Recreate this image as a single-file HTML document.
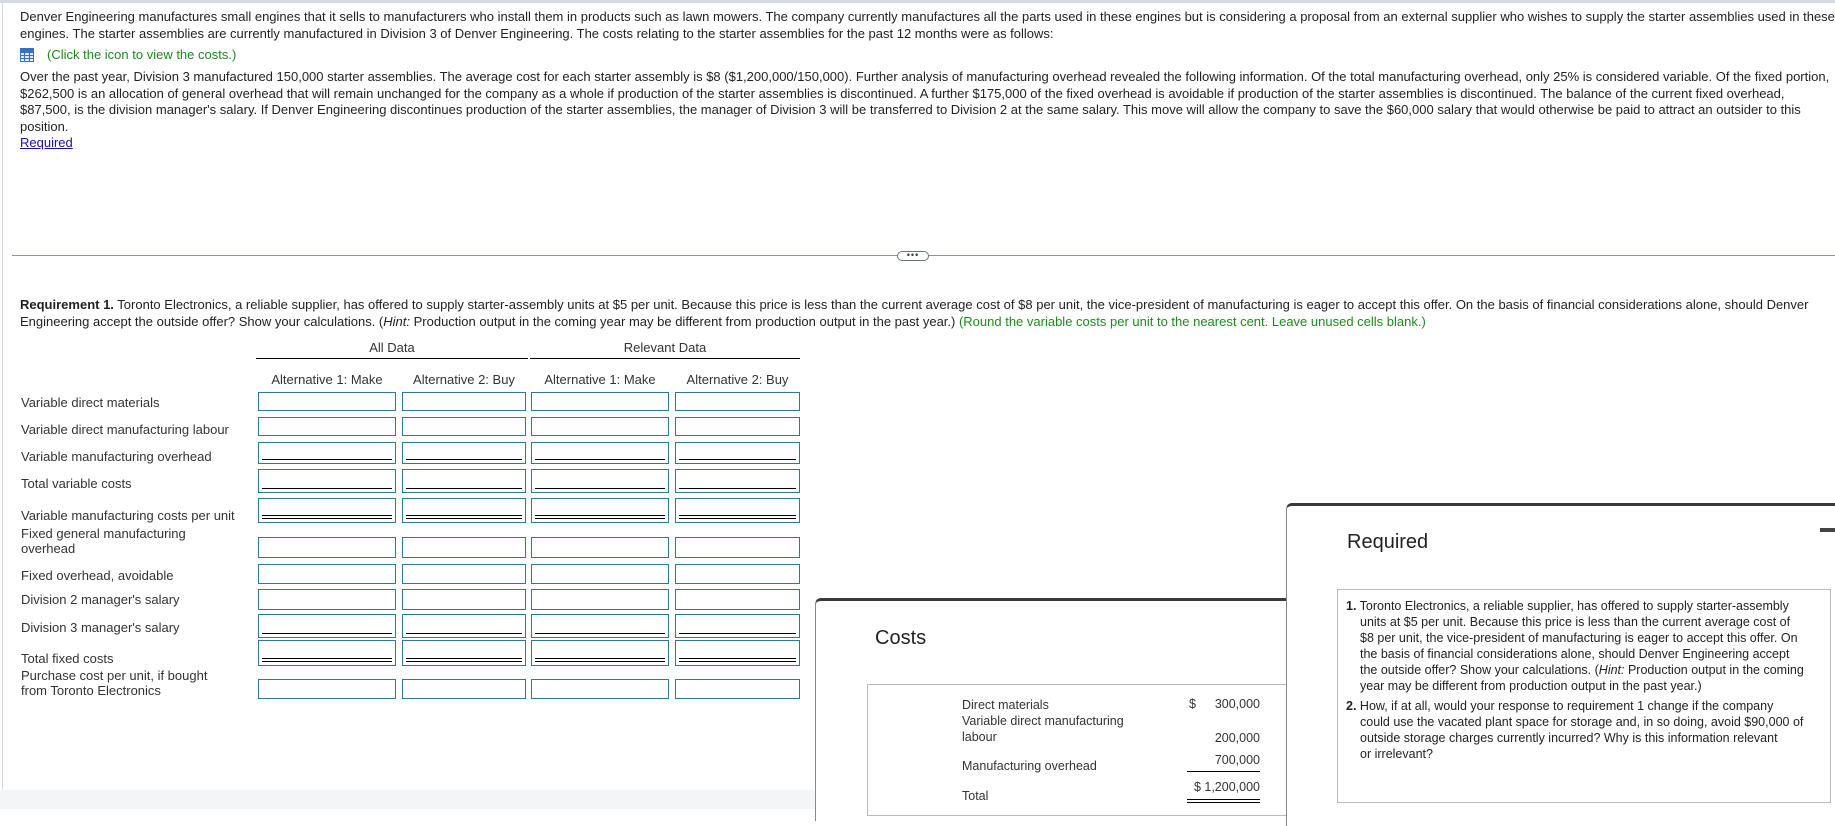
<!DOCTYPE html>
<html><head><meta charset="utf-8"><style>
body{margin:0;width:1835px;height:809px;overflow:hidden;background:#fff;font-family:"Liberation Sans",Arial,sans-serif;font-size:13px;color:#222;position:relative}
.a{position:absolute;white-space:nowrap}
.t{left:20px;line-height:16.5px}
.lbl{position:absolute;left:21px;font-size:13px;color:#333;line-height:15px}
.in{position:absolute;border:1px solid #2a7b9b;box-sizing:border-box;background:#fff}
.u:after{content:"";position:absolute;left:3px;right:3px;bottom:3px;border-bottom:1px solid #000}
.d:after{content:"";position:absolute;left:3px;right:3px;bottom:3px;height:2px;border-top:1px solid #000;border-bottom:1px solid #000}
.h{position:absolute;font-size:13px;color:#333;text-align:center}
</style></head><body>
<div class="a" style="left:0;top:0;width:1835px;height:3px;background:#d6dae0"></div>
<div class="a" style="left:2px;top:0;width:1px;height:809px;background:#d6dae0"></div>

<div class="a t" style="top:9px">Denver Engineering manufactures small engines that it sells to manufacturers who install them in products such as lawn mowers. The company currently manufactures all the parts used in these engines but is considering a proposal from an external supplier who wishes to supply the starter assemblies used in these<br>engines. The starter assemblies are currently manufactured in Division 3 of Denver Engineering. The costs relating to the starter assemblies for the past 12 months were as follows:</div>
<svg class="a" style="left:20px;top:48px" width="14" height="14" viewBox="0 0 14 14"><rect x="0.5" y="0.5" width="13" height="13" fill="#fff" stroke="#3a6fc8"/><path d="M0 4.5H14M0 7.5H14M0 10.5H14M4.5 0V14M9.5 0V14" stroke="#3a6fc8" stroke-width="1.2"/><rect x="0" y="0" width="14" height="4" fill="#3a6fc8"/></svg>
<div class="a" style="left:47px;top:47px;color:#1e8a1e">(Click the icon to view the costs.)</div>
<div class="a t" style="top:69px">Over the past year, Division 3 manufactured 150,000 starter assemblies. The average cost for each starter assembly is $8 ($1,200,000/150,000). Further analysis of manufacturing overhead revealed the following information. Of the total manufacturing overhead, only 25% is considered variable. Of the fixed portion,<br>$262,500 is an allocation of general overhead that will remain unchanged for the company as a whole if production of the starter assemblies is discontinued. A further $175,000 of the fixed overhead is avoidable if production of the starter assemblies is discontinued. The balance of the current fixed overhead,<br>$87,500, is the division manager's salary. If Denver Engineering discontinues production of the starter assemblies, the manager of Division 3 will be transferred to Division 2 at the same salary. This move will allow the company to save the $60,000 salary that would otherwise be paid to attract an outsider to this<br>position.<br><span style="color:#1a0dab;text-decoration:underline">Required</span></div>

<div class="a" style="left:12px;top:255px;width:1823px;height:1px;background:#8a93a3"></div>
<div class="a" style="left:897px;top:251px;width:30px;height:8px;border:1px solid #6b7483;border-radius:5px;background:#fff;font-size:9px;line-height:6px;text-align:center;color:#333;letter-spacing:1px">•••</div>

<div class="a t" style="top:297px"><b>Requirement 1.</b> Toronto Electronics, a reliable supplier, has offered to supply starter-assembly units at $5 per unit. Because this price is less than the current average cost of $8 per unit, the vice-president of manufacturing is eager to accept this offer. On the basis of financial considerations alone, should Denver<br>Engineering accept the outside offer? Show your calculations. (<i>Hint:</i> Production output in the coming year may be different from production output in the past year.) <span style="color:#1e8a1e">(Round the variable costs per unit to the nearest cent. Leave unused cells blank.)</span></div>

<div class="h" style="left:256px;width:272px;top:340px">All Data</div>
<div class="h" style="left:530px;width:270px;top:340px">Relevant Data</div>
<div class="a" style="left:256px;top:358px;width:272px;height:1px;background:#000"></div>
<div class="a" style="left:530px;top:358px;width:270px;height:1px;background:#000"></div>
<div class="h" style="left:258px;width:138px;top:372px">Alternative 1: Make</div>
<div class="h" style="left:402px;width:124px;top:372px">Alternative 2: Buy</div>
<div class="h" style="left:531px;width:138px;top:372px">Alternative 1: Make</div>
<div class="h" style="left:675px;width:125px;top:372px">Alternative 2: Buy</div>

<div class="lbl" style="top:395px">Variable direct materials</div>
<div class="lbl" style="top:422px">Variable direct manufacturing labour</div>
<div class="lbl" style="top:449px">Variable manufacturing overhead</div>
<div class="lbl" style="top:476px">Total variable costs</div>
<div class="lbl" style="top:508px">Variable manufacturing costs per unit</div>
<div class="lbl" style="top:526px">Fixed general manufacturing<br>overhead</div>
<div class="lbl" style="top:568px">Fixed overhead, avoidable</div>
<div class="lbl" style="top:592px">Division 2 manager's salary</div>
<div class="lbl" style="top:620px">Division 3 manager's salary</div>
<div class="lbl" style="top:651px">Total fixed costs</div>
<div class="lbl" style="top:668px">Purchase cost per unit, if bought<br>from Toronto Electronics</div>

<div id="g"></div>
<script>
var rows=[[392,19,""],[417,19,""],[442,22,"u"],[469,24,"u"],[498,25,"d"],[537,21,""],[564,20,""],[589,21,""],[614,24,"u"],[640,26,"d"],[679,20,""]];
var cols=[[258,138],[402,124],[531,138],[675,125]];
var h="";rows.forEach(function(r){cols.forEach(function(c){h+='<div class="in '+r[2]+'" style="left:'+c[0]+'px;top:'+r[0]+'px;width:'+c[1]+'px;height:'+r[1]+'px"></div>';});});
document.getElementById("g").outerHTML=h;
</script>

<div class="a" style="left:0;top:790px;width:815px;height:19px;background:#f4f5f7"></div>

<!-- Costs panel -->
<div class="a" style="left:815px;top:598px;width:500px;height:220px;background:#fff;border-top:3px solid #3a3a3a;border-left:1px solid #888;border-top-left-radius:6px"></div>
<div class="a" style="left:875px;top:627px;font-size:20px;color:#222">Costs</div>
<div class="a" style="left:867px;top:684px;width:460px;height:130px;border:1px solid #bbb;background:#fff"></div>
<div class="a" style="left:962px;top:697px;font-size:12.5px;color:#333;line-height:16px">Direct materials<br>Variable direct manufacturing<br>labour</div>
<div class="a" style="left:962px;top:759px;font-size:12.5px;color:#333">Manufacturing overhead</div>
<div class="a" style="left:962px;top:789px;font-size:12.5px;color:#333">Total</div>
<div class="a" style="left:1189px;top:697px;font-size:12.5px;color:#333">$</div>
<div class="a" style="left:1190px;top:697px;width:70px;text-align:right;font-size:12.5px;color:#333">300,000</div>
<div class="a" style="left:1190px;top:731px;width:70px;text-align:right;font-size:12.5px;color:#333">200,000</div>
<div class="a" style="left:1190px;top:753px;width:70px;text-align:right;font-size:12.5px;color:#333">700,000</div>
<div class="a" style="left:1187px;top:771px;width:73px;height:1px;background:#000"></div>
<div class="a" style="left:1189px;top:780px;width:71px;font-size:12.5px;color:#333;text-align:right">$ 1,200,000</div>
<div class="a" style="left:1187px;top:799px;width:73px;height:1px;background:#000"></div>
<div class="a" style="left:1187px;top:802px;width:73px;height:1px;background:#000"></div>

<!-- Required panel -->
<div class="a" style="left:1286px;top:503px;width:560px;height:320px;background:#fff;border-top:3px solid #3a3a3a;border-left:1px solid #888;border-top-left-radius:6px"></div>
<div class="a" style="left:1347px;top:531px;font-size:20px;color:#222">Required</div>
<div class="a" style="left:1820px;top:528px;width:15px;height:4px;background:#444"></div>
<div class="a" style="left:1337px;top:589px;width:494px;height:214px;border:1px solid #bbb;box-sizing:border-box"></div>
<div class="a" style="left:1346px;top:598px;font-size:12.5px;line-height:16px;color:#222;white-space:normal;width:480px">
<div style="padding-left:14px;text-indent:-14px"><b>1.</b> Toronto Electronics, a reliable supplier, has offered to supply starter-assembly<br>units at $5 per unit. Because this price is less than the current average cost of<br>$8 per unit, the vice-president of manufacturing is eager to accept this offer. On<br>the basis of financial considerations alone, should Denver Engineering accept<br>the outside offer? Show your calculations. (<i>Hint:</i> Production output in the coming<br>year may be different from production output in the past year.)</div>
<div style="padding-left:14px;text-indent:-14px;margin-top:4px"><b>2.</b> How, if at all, would your response to requirement 1 change if the company<br>could use the vacated plant space for storage and, in so doing, avoid $90,000 of<br>outside storage charges currently incurred? Why is this information relevant<br>or irrelevant?</div>
</div>
</body></html>
